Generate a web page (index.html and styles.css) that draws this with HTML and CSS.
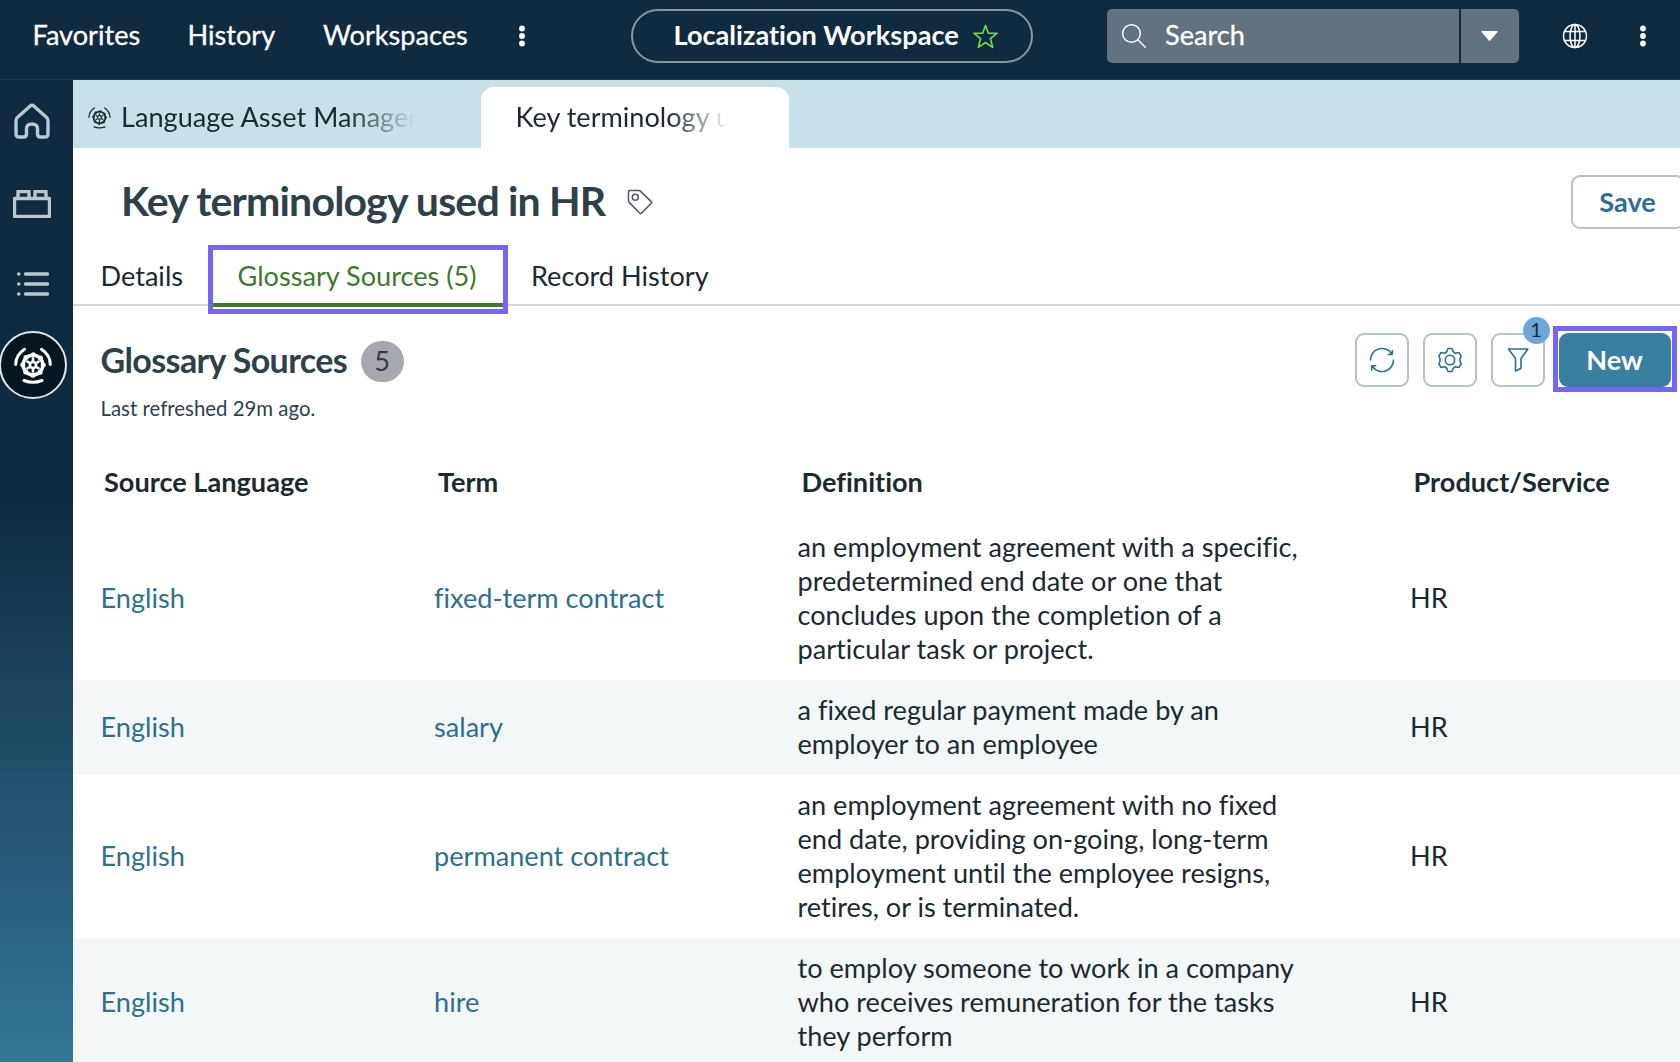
FILE: index.html
```html
<!DOCTYPE html>
<html lang="en">
<head>
<meta charset="utf-8">
<title>Key terminology used in HR</title>
<link rel="stylesheet" href="styles.css">
</head>
<body>
<svg class="defs" aria-hidden="true">
  <symbol id="asset" viewBox="0 0 38 38">
    <g fill="none" stroke="currentColor" stroke-linecap="round" stroke-linejoin="round">
      <path class="arc" d="M1.700 18.500Q1.800 9 10.500 3.300M36.300 18.500Q36.200 9 27.500 3.300M10 34.500q9 3.500 18 0"/>
      <circle class="ring" cx="19" cy="19" r="9.800"/>
      <circle class="lobes" cx="19" cy="19" r="10.200" stroke-dasharray="0 8.011"/>
      <circle class="hub" cx="19" cy="19" r="3.100"/>
      <path class="spokes" d="M19 12.500v2M19 23.500v2M13.400 15.700l1.700 1M22.900 21.300l1.700 1M24.600 15.700l-1.700 1M15.100 21.300l-1.700 1"/>
    </g>
  </symbol>
</svg>
<header class="topbar">
  <nav class="menu">
    <a class="m-fav">Favorites</a>
    <a class="m-his">History</a>
    <a class="m-wor">Workspaces</a>
    <svg class="dots" viewBox="0 0 8 22"><circle cx="4" cy="3.500" r="2.900"/><circle cx="4" cy="11" r="2.900"/><circle cx="4" cy="18.500" r="2.900"/></svg>
  </nav>
  <div class="pill"><span>Localization Workspace</span>
    <svg class="star" viewBox="0 0 24 24"><path d="M12 1.500l2.700 7.300 8.300.2-6.300 5 2.200 8.400-6.900-4.600-6.900 4.600 2.200-8.400L1 9l8.300-.2z"/></svg>
  </div>
  <div class="search">
    <div class="field">
      <svg class="lens" viewBox="0 0 24 24"><circle cx="9.500" cy="9.500" r="8.800"/><path d="M15.800 15.800l7.500 7.500"/></svg>
      <span>Search</span>
    </div>
    <div class="drop"><svg class="caret" viewBox="0 0 17 10"><path d="M1 0h15q1 .3.500 1L9.200 9.500q-.7.700-1.400 0L.5 1Q0 .3 1 0z"/></svg></div>
  </div>
  <svg class="globe" viewBox="0 0 26 26"><circle cx="13" cy="13" r="11.500"/><ellipse cx="13" cy="13" rx="5" ry="11.500"/><path d="M13 1.500v23M3 8.500h20M3 17.500h20"/></svg>
  <svg class="dots" viewBox="0 0 8 22"><circle cx="4" cy="3.500" r="2.900"/><circle cx="4" cy="11" r="2.900"/><circle cx="4" cy="18.500" r="2.900"/></svg>
</header>
<div class="shell">
  <aside class="rail">
    <svg class="home" viewBox="0 0 36 36"><path d="M18 2.200q-1 0-1.800.8L3.600 14.200Q2 15.600 2 18v13q0 3 3 3h4.500q3 0 3-3v-5q0-5 5.500-5t5.500 5v5q0 3 3 3H31q3 0 3-3V18q0-2.400-1.600-3.800L19.800 3q-.8-.8-1.800-.8z"/></svg>
    <svg class="brick" viewBox="0 0 38 28"><path d="M1.500 8.500h35v18h-35zM5 8V1.500h11V8M22 8V1.500h11V8"/></svg>
    <svg class="list" viewBox="0 0 32 26"><path d="M8.500 3h22M8.500 13h22M8.500 23h22M1.700 3h.1M1.700 13h.1M1.700 23h.1"/></svg>
    <div class="current"><svg class="asset"><use href="#asset"/></svg></div>
  </aside>
  <main class="content">
    <div class="tabs">
      <div class="tab"><svg class="tab-icon"><use href="#asset"/></svg><div class="clip clip-a">Language Asset Manager</div></div>
      <div class="tab active"><div class="clip clip-b">Key terminology u</div></div>
    </div>
    <div class="title-row">
      <h1>Key terminology used in HR</h1>
      <svg class="tag" viewBox="0 0 26 26"><path d="M2.500 1.500h9.500q.8 0 1.400.6l10.800 10.500q.8.900 0 1.700l-9.800 9.900q-.8.800-1.600 0L2.200 13.400q-.7-.7-.7-1.500V2.500q0-1 1-1z"/><circle cx="8.300" cy="8.300" r="3"/></svg>
      <button class="save">Save</button>
    </div>
    <div class="subtabs">
      <a class="s-det">Details</a>
      <a class="s-glo">Glossary Sources (5)</a>
      <a class="s-rec">Record History</a>
    </div>
    <div class="list-head">
      <div class="list-title">
        <div class="line"><h2>Glossary Sources</h2><b class="count">5</b></div>
        <p>Last refreshed 29m ago.</p>
      </div>
      <div class="actions">
        <button class="icon-btn"><svg viewBox="0 0 26 26"><path d="M1.500 13.500A11.500 11.500 0 0 1 22.500 6.500M24.500 12.500A11.500 11.500 0 0 1 3.500 19.500M23.300 3v4.500h-4.600M2.700 23.500V18.700h4.600"/></svg></button>
        <button class="icon-btn"><svg viewBox="0 0 26 26"><path d="M11 1.500h4l1.200 3.300 2.300 1.400 3.400-.7 2.300 3.700-1.200 2.300v3l1.200 2.300-2.300 3.700-3.400-.7-2.300 1.400L15 24.500h-4l-1.200-3.300-2.300-1.400-3.400.7-2.300-3.700L3 14.500v-3L1.800 9.200l2.300-3.700 3.400.7 2.300-1.400z"/><circle cx="13" cy="13" r="4.700"/></svg></button>
        <button class="icon-btn"><svg viewBox="0 0 26 26"><path d="M3.500 2h19.300l-6.800 9.500v9.800L10.500 24V11.500z"/></svg><b class="bubble">1</b></button>
        <div class="mark"><button class="new">New</button></div>
      </div>
    </div>
    <div class="grid">
      <div class="row head"><div>Source Language</div><div>Term</div><div>Definition</div><div>Product/Service</div></div>
      <div class="row"><a>English</a><a>fixed-term contract</a><div>an employment agreement with a specific,<br>predetermined end date or one that<br>concludes upon the completion of a<br>particular task or project.</div><div>HR</div></div>
      <div class="row"><a>English</a><a>salary</a><div>a fixed regular payment made by an<br>employer to an employee</div><div>HR</div></div>
      <div class="row"><a>English</a><a>permanent contract</a><div>an employment agreement with no fixed<br>end date, providing on-going, long-term<br>employment until the employee resigns,<br>retires, or is terminated.</div><div>HR</div></div>
      <div class="row"><a>English</a><a>hire</a><div>to employ someone to work in a company<br>who receives remuneration for the tasks<br>they perform</div><div>HR</div></div>
    </div>
  </main>
</div>
</body>
</html>
```
FILE: styles.css
```css
* { box-sizing: border-box; }
body {
  margin: 0;
  height: 1062px;
  overflow: hidden;
  display: flex;
  flex-direction: column;
  font-family: Lato, "Liberation Sans", sans-serif;
  font-size: 27.14px;
  line-height: 34px;
  font-variant-ligatures: none;
  color: #1b2a30;
  background: #fff;
}
h1, h2, p { margin: 0; }
button { font: inherit; padding: 0; margin: 0; cursor: pointer; }
svg { display: block; flex: none; }
.defs { width: 0; height: 0; position: absolute; }

.topbar {
  flex: none;
  height: 80px;
  padding: 9px 33px 0 32.5px;
  display: flex;
  align-items: flex-start;
  background: #102b40;
  border-bottom: 1px solid #1d3a50;
  color: #fff;
}
.menu { display: flex; align-items: center; height: 54px; width: 598.5px; }
.menu a { white-space: nowrap; padding-bottom: 2px; -webkit-text-stroke: .3px #fff; }
.m-fav { width: 155px; }
.m-his { width: 135.5px; }
.m-wor { width: 195px; }
.dots { width: 8px; height: 22px; fill: #fff; }
.pill {
  width: 402px;
  height: 54px;
  border: 2px solid #8797a2;
  border-radius: 27px;
  display: flex;
  align-items: center;
  padding-left: 40.5px;
  font-weight: 700;
}
.pill span { width: 299.5px; padding-bottom: 2px; white-space: nowrap; }
.star { width: 25px; height: 25px; fill: none; stroke: #72d54a; stroke-width: 1.6; stroke-linejoin: round; }
.search { display: flex; gap: 2px; margin-left: 74px; height: 54px; }
.field { width: 352px; display: flex; align-items: center; padding-left: 15px; background: #62737f; border-radius: 5px 0 0 5px; -webkit-text-stroke: .3px #fff; }
.field span { margin-left: 19px; padding-bottom: 2px; }
.lens { width: 24px; height: 24px; fill: none; stroke: #fff; stroke-width: 1.4; stroke-linecap: round; }
.drop { width: 57.5px; display: flex; align-items: center; justify-content: center; background: #62737f; border-radius: 0 5px 5px 0; }
.caret { width: 17px; height: 10px; fill: #fff; }
.globe { width: 26px; height: 26px; margin: 14px 0 0 43px; fill: none; stroke: #fff; stroke-width: 1.5; }
.globe + .dots { margin: 16px 0 0 51px; }

.shell { flex: 1; display: flex; min-height: 0; }
.rail {
  flex: none;
  width: 73px;
  background: linear-gradient(#102b40 0, #102b40 420px, #327698 982px);
  color: #bac7ce;
}
.home, .brick, .list { fill: none; stroke: currentColor; stroke-width: 3.4; stroke-linecap: round; stroke-linejoin: round; }
.home { width: 36px; height: 36px; margin: 23px 0 0 14px; }
.brick { width: 38px; height: 28px; margin: 51px 0 0 13px; }
.list { width: 32px; height: 26px; margin: 53px 0 0 17px; }
.current {
  width: 68px;
  height: 68px;
  margin: 34px 0 0 -1.5px;
  border-radius: 50%;
  border: 2px solid #dfe5e8;
  background: #071520;
  color: #fff;
  display: flex;
  align-items: center;
  justify-content: center;
}
.asset { width: 38px; height: 38px; --arc: 3; --ring: 3.4; --lobe: 5; --hub: 2.6; }
.tab-icon { width: 23px; height: 23px; --arc: 2.2; --ring: 2.8; --lobe: 4; --hub: 2; }
.arc { stroke-width: var(--arc); }
.ring { stroke-width: var(--ring); }
.lobes { stroke-width: var(--lobe); }
.hub, .spokes { stroke-width: var(--hub); }

.content { flex: 1; min-width: 0; }
.tabs { display: flex; height: 68px; padding-top: 7px; background: #c8e0e7; }
.tab { width: 408px; display: flex; align-items: center; padding-left: 15px; color: #1b2a30; }
.tab.active { width: 308px; padding-left: 34.5px; background: #fff; border-radius: 13px 13px 0 0; }
.clip { overflow: hidden; white-space: nowrap; height: 36px; padding-bottom: 2px; }
.clip-a { width: 295px; margin-left: 10px; -webkit-mask-image: linear-gradient(90deg, #000 76%, transparent 100%); mask-image: linear-gradient(90deg, #000 76%, transparent 100%); }
.clip-b { width: 213px; -webkit-mask-image: linear-gradient(90deg, #000 72%, transparent 100%); mask-image: linear-gradient(90deg, #000 72%, transparent 100%); }

.title-row { display: flex; align-items: center; height: 107px; padding: 1px 0 0 48px; }
h1 { width: 506px; font-size: 41px; line-height: 50px; letter-spacing: -.82px; font-weight: 700; color: #2e4149; white-space: nowrap; padding-bottom: 2px; }
.tag { width: 26px; height: 26px; fill: none; stroke: #4a5b62; stroke-width: 1.5; }
.save { margin-left: auto; width: 114px; margin-right: -5px; height: 54px; border: 2px solid #b4c3ca; border-radius: 9px; background: #fff; color: #2e6f90; font-weight: 700; padding: 0 1px 1px 0; }

.subtabs { display: flex; height: 51px; border-bottom: 2px solid #d0d9dd; padding-left: 27.5px; }
.subtabs a { white-space: nowrap; padding-top: 4px; }
.s-det { width: 107.5px; }
.s-glo { width: 300px; color: #3c7a2a; }
.subtabs .s-glo { height: 69px; margin-top: -10px; padding: 9px 0 0 24.5px; border: 5px solid #7565f6; background: linear-gradient(#417a2c, #417a2c) 0 53px / 100% 4px no-repeat #fff; }
.s-rec { margin-left: 23px; }

.list-head { display: flex; justify-content: space-between; height: 146px; padding-left: 27.5px; }
.line { display: flex; align-items: center; height: 68px; margin-top: 21px; }
h2 { width: 260px; font-size: 34px; letter-spacing: -.62px; font-weight: 700; color: #2e4149; white-space: nowrap; padding-bottom: 2px; }
.count { width: 43px; height: 41px; border-radius: 21px; background: #a7a7b0; color: #2e4149; font-weight: 400; text-align: center; line-height: 40px; }
.list-title p { font-size: 20.4px; line-height: 26px; color: #2e4149; }
.actions { display: flex; align-items: flex-start; padding-top: 20px; }
.icon-btn { position: relative; width: 54px; height: 54px; margin: 7px 14px 0 0; border: 2px solid #b4c3c9; border-radius: 9px; background: #fff; display: flex; align-items: center; justify-content: center; }
.icon-btn svg { width: 26px; height: 26px; fill: none; stroke: #2e6f90; stroke-width: 1.6; stroke-linejoin: round; }
.bubble { position: absolute; left: 30px; top: -18px; width: 27px; height: 27px; border-radius: 50%; background: #6fa6d9; color: #1b2a30; font-size: 20px; line-height: 25px; font-weight: 400; text-align: center; }
.mark { width: 124px; height: 66px; margin: 0 3.5px 0 -6px; border: 5px solid #7565f6; padding: 2px 1px 0 1px; }
.new { display: block; width: 112px; height: 54px; border: 0; border-radius: 9px; background: #397fa2; color: #fff; font-weight: 700; padding-bottom: 1px; }

.row { display: grid; grid-template-columns: 333.5px 363.5px 612.5px 1fr; align-items: center; padding: 13px 0 14px 27.5px; }
.row > * { white-space: nowrap; }
.row:nth-child(odd) { background: #f3f7f8; }
.row a { color: #2e6f90; }
.row.head { height: 65px; grid-template-columns: 334px 363.5px 612px 1fr; padding: 13px 0 0 31px; align-items: start; background: #fff; font-weight: 700; }
```
